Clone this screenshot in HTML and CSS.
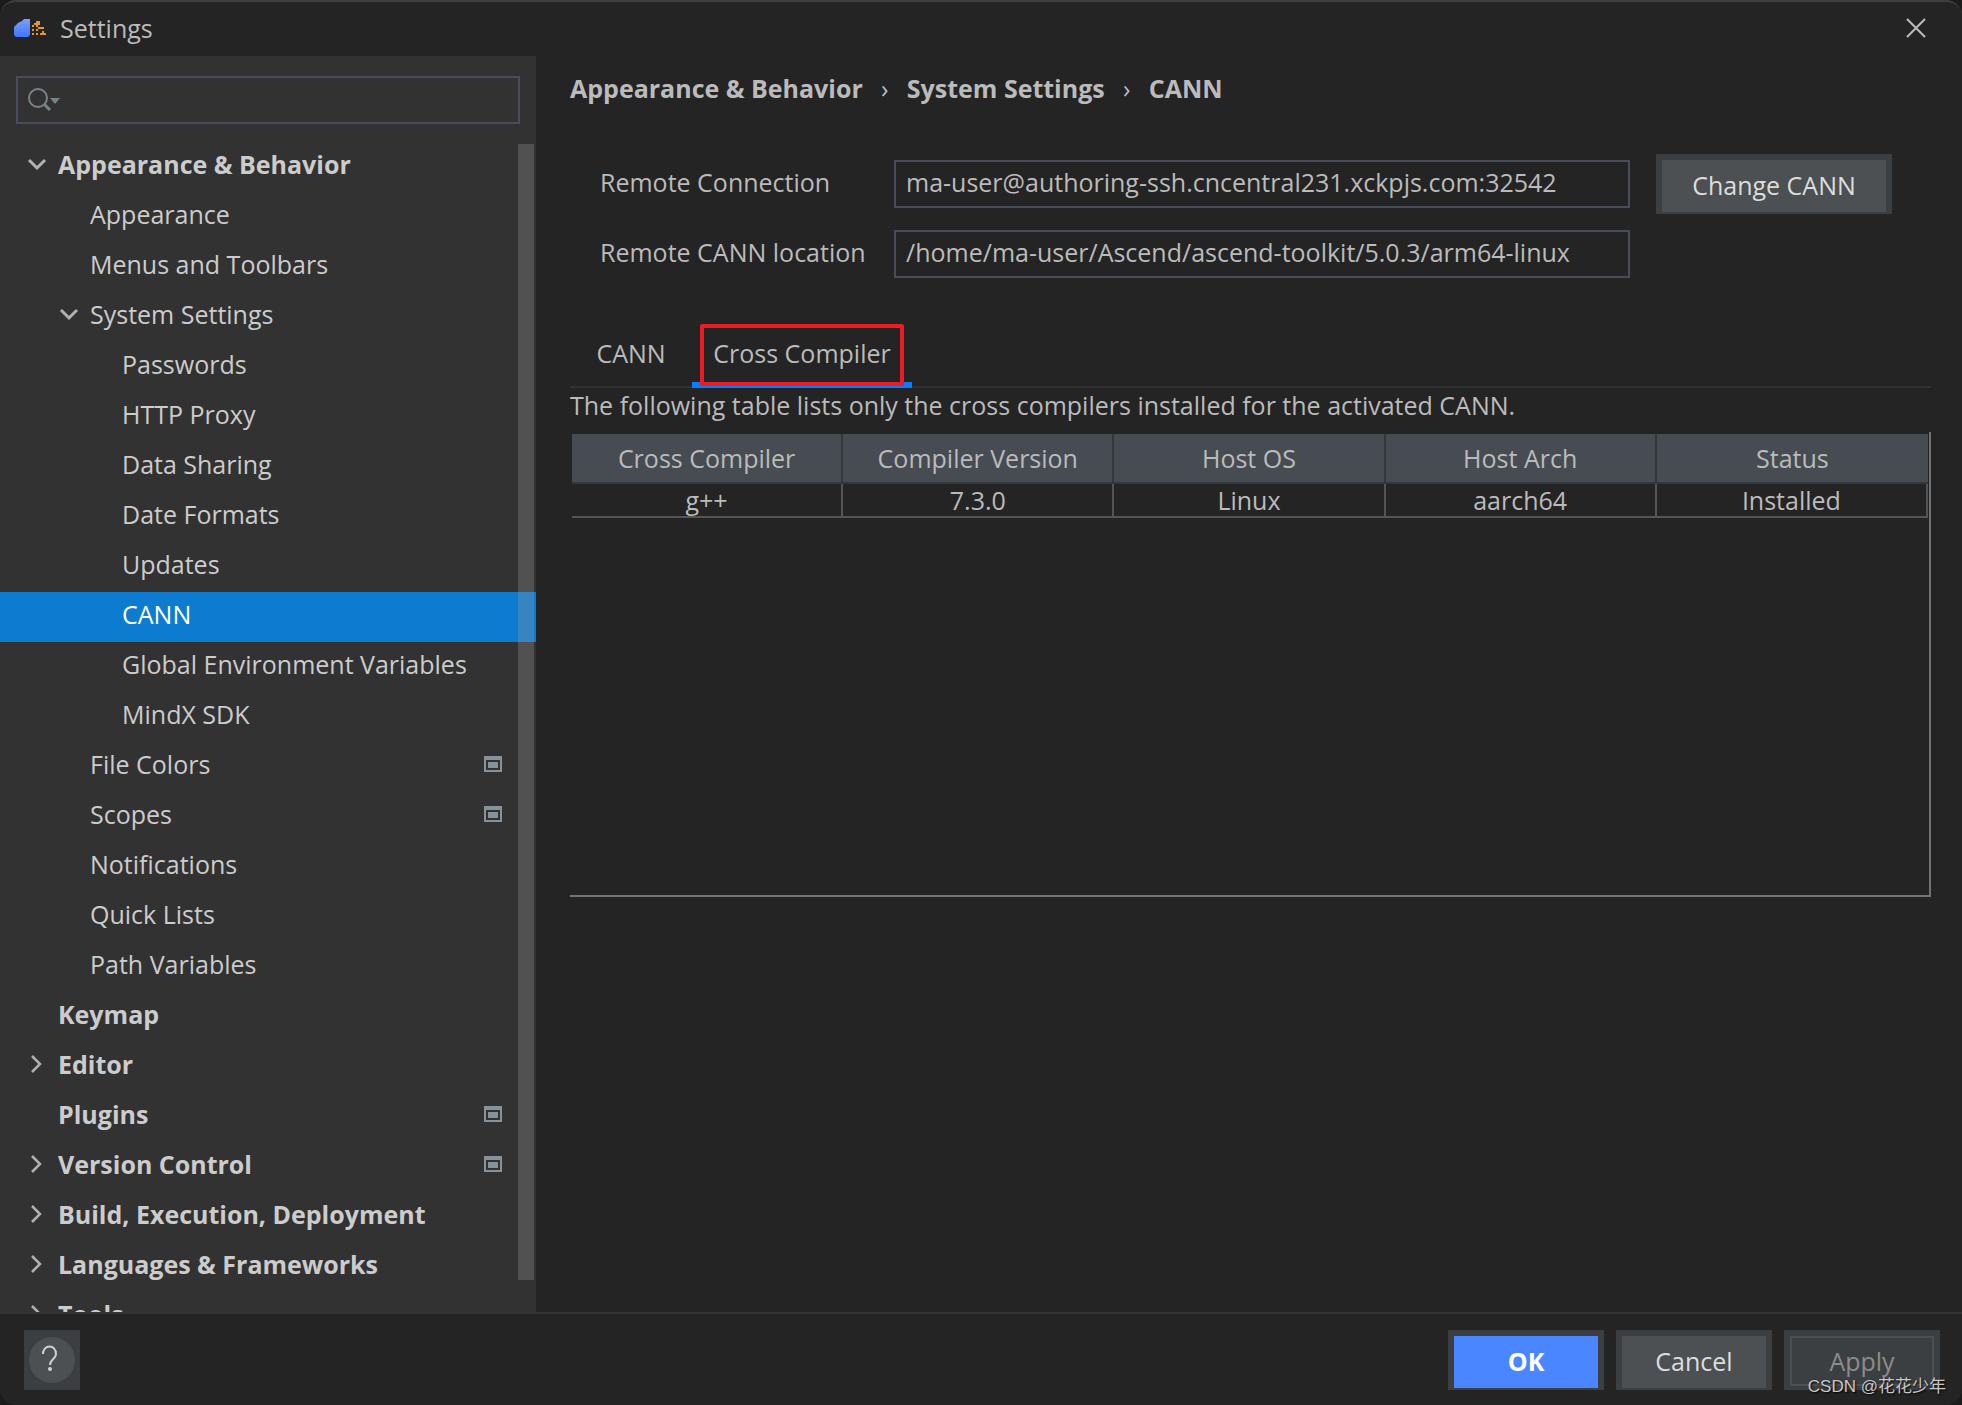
FILE: index.html
```html
<!DOCTYPE html>
<html lang="en">
<head>
<meta charset="utf-8">
<title>Settings</title>
<link rel="stylesheet" href="styles.css">
</head>
<body>
<svg class="defs" aria-hidden="true">
  <symbol id="down" viewBox="0 0 20 20"><path d="M2 6l8 8 8-8" fill="none" stroke="currentColor" stroke-width="3"/></symbol>
  <symbol id="right" viewBox="0 0 20 20"><path d="M5 2l8 8-8 8" fill="none" stroke="currentColor" stroke-width="2.5"/></symbol>
  <symbol id="project" viewBox="0 0 18 16"><path fill-rule="evenodd" d="M0 0h18v16H0zM2 4v10h14V4zM4 6h10v6H4z" fill="currentColor"/></symbol>
</svg>
<div class="window">
  <header class="titlebar">
    <svg class="app-icon" viewBox="0 0 32 18" width="32" height="18" aria-hidden="true">
      <defs><linearGradient id="g" x1="0" y1="0" x2="0" y2="1"><stop offset="0" stop-color="#7da0f5"/><stop offset="1" stop-color="#3f75ff"/></linearGradient></defs>
      <path d="M10 0h6v16l-2 2H2l-2-2V8l2-2 2-2 2-1 2-1z" fill="url(#g)"/>
      <path d="M22 2h4v4h-4zM20 4h2v2h-2zM24 8h6v2h-6zM22 6h2v2h-2zM18 6h2v2h-2zM18 10h2v2h-2zM22 10h2v2h-2zM18 14h2v2h-2zM22 14h2v2h-2zM26 14h6v2h-6zM28 12h2v2h-2z" fill="#e8942c"/>
    </svg>
    <h1 class="title">Settings</h1>
    <button class="close" aria-label="Close"><svg viewBox="0 0 20 20" width="20" height="20"><path d="M1 1l18 18M19 1L1 19" stroke="currentColor" stroke-width="2"/></svg></button>
  </header>
  <div class="body">
    <aside class="sidebar">
      <div class="search">
        <svg class="search-icon" viewBox="0 0 34 26" width="34" height="26" aria-hidden="true"><circle cx="10" cy="11" r="9" fill="none" stroke="currentColor" stroke-width="2"/><path d="M16 17l6 6" stroke="currentColor" stroke-width="3"/><path d="M22 11h10l-5 6z" fill="currentColor"/></svg>
        <input type="text" aria-label="Search settings">
      </div>
      <nav class="tree" aria-label="Settings categories">
        <a class="row top" href="#"><svg class="arrow"><use href="#down"/></svg>Appearance &amp; Behavior</a>
        <a class="row l2" href="#">Appearance</a>
        <a class="row l2" href="#">Menus and Toolbars</a>
        <a class="row l2" href="#"><svg class="arrow"><use href="#down"/></svg>System Settings</a>
        <a class="row l3" href="#">Passwords</a>
        <a class="row l3" href="#">HTTP Proxy</a>
        <a class="row l3" href="#">Data Sharing</a>
        <a class="row l3" href="#">Date Formats</a>
        <a class="row l3" href="#">Updates</a>
        <a class="row l3 selected" href="#" aria-current="page">CANN</a>
        <a class="row l3" href="#">Global Environment Variables</a>
        <a class="row l3" href="#">MindX SDK</a>
        <a class="row l2" href="#">File Colors<svg class="badge"><use href="#project"/></svg></a>
        <a class="row l2" href="#">Scopes<svg class="badge"><use href="#project"/></svg></a>
        <a class="row l2" href="#">Notifications</a>
        <a class="row l2" href="#">Quick Lists</a>
        <a class="row l2" href="#">Path Variables</a>
        <a class="row top" href="#">Keymap</a>
        <a class="row top" href="#"><svg class="arrow"><use href="#right"/></svg>Editor</a>
        <a class="row top" href="#">Plugins<svg class="badge"><use href="#project"/></svg></a>
        <a class="row top" href="#"><svg class="arrow"><use href="#right"/></svg>Version Control<svg class="badge"><use href="#project"/></svg></a>
        <a class="row top" href="#"><svg class="arrow"><use href="#right"/></svg>Build, Execution, Deployment</a>
        <a class="row top" href="#"><svg class="arrow"><use href="#right"/></svg>Languages &amp; Frameworks</a>
        <a class="row top" href="#"><svg class="arrow"><use href="#right"/></svg>Tools</a>
        <div class="scrollbar"></div>
      </nav>
    </aside>
    <main class="content">
      <nav class="crumbs" aria-label="Breadcrumb">
        <a href="#">Appearance &amp; Behavior</a><span class="sep">›</span><a href="#">System Settings</a><span class="sep">›</span><a href="#">CANN</a>
      </nav>
      <form class="form">
        <label for="conn">Remote Connection</label>
        <input id="conn" type="text" value="ma-user@authoring-ssh.cncentral231.xckpjs.com:32542">
        <button class="btn change" type="button"><span>Change CANN</span></button>
        <label for="loc">Remote CANN location</label>
        <input id="loc" type="text" value="/home/ma-user/Ascend/ascend-toolkit/5.0.3/arm64-linux">
      </form>
      <div class="tabs" role="tablist">
        <button class="tab" role="tab">CANN</button>
        <button class="tab active" role="tab" aria-selected="true">Cross Compiler</button>
      </div>
      <p class="note">The following table lists only the cross compilers installed for the activated CANN.</p>
      <div class="table-pane">
        <table>
          <thead><tr><th>Cross Compiler</th><th>Compiler Version</th><th>Host OS</th><th>Host Arch</th><th>Status</th></tr></thead>
          <tbody><tr><td>g++</td><td>7.3.0</td><td>Linux</td><td>aarch64</td><td>Installed</td></tr></tbody>
        </table>
      </div>
    </main>
  </div>
  <footer class="footer">
    <button class="help" aria-label="Help"><svg viewBox="0 0 46 46" width="46" height="46"><circle cx="23" cy="23" r="23" fill="#4c5052"/><path d="M14 17c0-10 13-10 13 0 0 5-6 5-6 11" fill="none" stroke="#d0d0d0" stroke-width="2"/><circle cx="21" cy="32" r="2" fill="#d0d0d0"/></svg></button>
    <div class="actions">
      <button class="btn primary"><span>OK</span></button>
      <button class="btn"><span>Cancel</span></button>
      <button class="btn" disabled><span>Apply</span></button>
    </div>
  </footer>
  <div class="watermark">CSDN @花花少年</div>
</div>
</body>
</html>
```
FILE: styles.css
```css
* { box-sizing: border-box; }

body {
  margin: 0;
  background: #1b1b1b;
  color: #bbb;
  font: 25px/34px "Open Sans", "Noto Sans", sans-serif;
}

a { color: inherit; text-decoration: none; }
button, input { font: inherit; color: inherit; }
.defs { display: none; }

.window {
  position: relative;
  display: flex;
  flex-direction: column;
  height: 100vh;
  overflow: hidden;
  background: #242424;
  border-top: 2px solid #3f3f3f;
  border-radius: 16px;
}

.titlebar {
  display: flex;
  align-items: center;
  height: 54px;
  padding: 0 36px 2px 14px;
  flex: none;
}
.title { flex: 1; margin: 0 0 0 14px; font-size: 25px; font-weight: 400; }
.close { display: flex; padding: 0; border: 0; background: none; }

.body { display: flex; flex: 1; min-height: 0; border-bottom: 2px solid #323232; }

.sidebar {
  display: flex;
  flex-direction: column;
  flex: none;
  width: 536px;
  padding-top: 20px;
  background: #323232;
  color: #ccc;
}
.search {
  display: flex;
  align-items: center;
  height: 48px;
  margin: 0 16px 18px;
  padding-left: 10px;
  border: 2px solid #494c5b;
  flex: none;
}
.search-icon { color: #7a8488; }
.search input { flex: 1; min-width: 0; border: 0; outline: 0; background: none; }

.tree { position: relative; flex: 1; min-height: 0; overflow: hidden; }
.row { display: flex; align-items: center; height: 50px; padding: 0 34px 6px 58px; }
.row.top { font-weight: 700; }
.l2 { padding-left: 90px; }
.l3 { padding-left: 122px; }
.selected { background: #0c7bd0; color: #fff; }
.arrow { width: 20px; height: 20px; margin: 0 11px 0 -31px; color: #afb1b3; }
.badge { width: 18px; height: 16px; margin-left: auto; color: #87939a; }
.scrollbar {
  position: absolute;
  top: 2px;
  right: 2px;
  bottom: 32px;
  width: 16px;
  background: rgba(155, 155, 155, .3);
}

.content { flex: 1; min-width: 0; padding: 15px 31px 0 34px; }
.crumbs { display: flex; font-weight: 700; }
.sep { width: 44px; text-align: center; font-weight: 400; }

.form {
  display: grid;
  grid-template-columns: 268px minmax(0, 736px) 236px;
  column-gap: 26px;
  row-gap: 22px;
  align-items: center;
  margin: 55px 0 0 30px;
}
.form input {
  height: 48px;
  padding: 0 10px 4px;
  border: 2px solid #494c5b;
  background: none;
}
.form label { padding-bottom: 4px; white-space: nowrap; }

.btn {
  display: flex;
  width: 156px;
  height: 60px;
  padding: 6px 6px 2px;
  border: 0;
  background: #3c3f41;
  color: #ddd;
}
.btn span {
  display: flex;
  flex: 1;
  align-items: center;
  justify-content: center;
  height: 52px;
  padding-bottom: 2px;
  background: #4c5052;
}
.primary span { background: #4a86ff; color: #fff; font-weight: 700; }
.btn:disabled { color: #8c8c8c; }
.btn:disabled span { height: 50px; padding: 0; border: 2px solid #4c5052; background: none; }
.change { width: 236px; margin: -6px 0; }

.tabs { display: flex; height: 64px; margin-top: 46px; border-bottom: 2px solid #323232; }
.tab { width: 122px; height: 64px; padding: 0 0 6px; border: 0; background: none; white-space: nowrap; }
.tab.active {
  position: relative;
  width: 220px;
  border-bottom: 6px solid #0a7cff;
  padding-bottom: 0;
}
.tab.active::after {
  content: "";
  position: absolute;
  inset: 0 8px -4px;
  border: 4px solid #ed1c24;
  border-radius: 2px;
}

.note { margin: 0 0 10px; }
.table-pane {
  height: 465px;
  padding: 2px 1px 0 2px;
  border-right: 2px solid #6f7375;
  border-bottom: 2px solid #6f7375;
}
table { width: 100%; table-layout: fixed; border-collapse: separate; border-spacing: 0; }
th, td { padding: 0; font-weight: 400; text-align: center; }
th { height: 50px; background: #474b52; border-bottom: 2px solid #33383b; border-right: 2px solid #33383b; }
th:last-child { border-right: 0; }
td { height: 34px; line-height: 32px; border-right: 2px solid #555; border-bottom: 2px solid #555; }

.footer { display: flex; align-items: center; justify-content: space-between; flex: none; height: 91px; padding: 1px 22px 0 24px; }
.help { display: flex; align-items: center; justify-content: center; width: 56px; height: 60px; padding: 0; border: 0; background: #3c3f41; }
.actions { display: flex; gap: 12px; }

.watermark {
  position: absolute;
  right: 16px;
  bottom: 6px;
  color: #c8c8c8;
  font: 17px/24px "Liberation Sans", "Noto Sans CJK SC", sans-serif;
  text-shadow: 1px 1px 2px #000;
}
```
